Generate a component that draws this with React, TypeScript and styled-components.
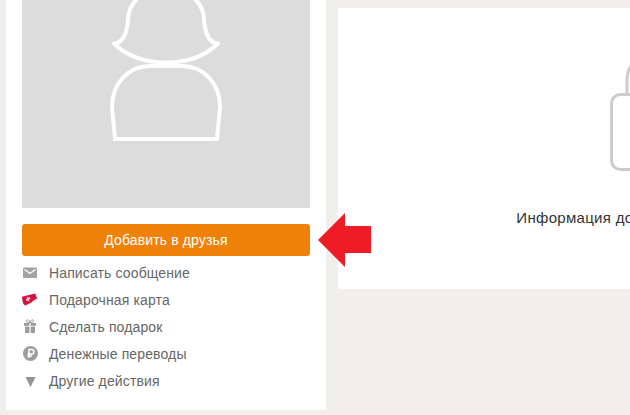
import React from 'react';
import styled, { createGlobalStyle } from 'styled-components';

const GlobalStyle = createGlobalStyle`
	html, body {
		margin: 0;
		padding: 0;
		width: 630px;
		height: 415px;
		overflow: hidden;
		background: #f0efeb;
		font-family: 'Liberation Sans', Arial, sans-serif;
	}
`;

const actions = [
	{ label: 'Написать сообщение', icon: <MailIcon /> },
	{ label: 'Подарочная карта', icon: <CardIcon /> },
	{ label: 'Сделать подарок', icon: <GiftIcon /> },
	{ label: 'Денежные переводы', icon: <RubleIcon /> },
	{ label: 'Другие действия', icon: <TriangleIcon /> },
];

function MailIcon() {
	return (
		<svg width='16' height='12' viewBox='0 0 16 12'>
			<rect x='1' y='0.5' width='14' height='10.5' rx='1' fill='#a3a3a3' />
			<path d='M2.5 2.5 L8 6.5 L13.5 2.5' fill='none' stroke='#fff' strokeWidth='1.4' />
		</svg>
	);
}

function CardIcon() {
	return (
		<svg width='17' height='13' viewBox='0 0 17 13'>
			<path d='M0 3.5 L14 0 L16.5 6.5 L3.5 13 Q1 11.5 0.5 8 Z' fill='#d4123f' />
			<path d='M11 9.2 L16.5 5.6' stroke='#fff' strokeWidth='1.2' />
			<path d='M5.5 3.8 L7.5 8.2 M4.3 6.6 L8.7 5.4 M4.8 8 L8.2 4' stroke='#f8d5dc' strokeWidth='1.1' />
		</svg>
	);
}

function GiftIcon() {
	return (
		<svg width='12' height='15' viewBox='0 0 12 15'>
			<path d='M6 3.4 C3 3.6 2 2.7 2.4 1.4 C3 0 5.4 1 6 3.4 C6.6 1 9 0 9.6 1.4 C10 2.7 9 3.6 6 3.4 Z' fill='none' stroke='#9c9c9c' strokeWidth='1' />
			<rect x='0' y='4' width='5.4' height='2.8' fill='#9c9c9c' />
			<rect x='6.6' y='4' width='5.4' height='2.8' fill='#9c9c9c' />
			<rect x='1' y='7.6' width='4.4' height='6.4' fill='#9c9c9c' />
			<rect x='6.6' y='7.6' width='4.4' height='6.4' fill='#9c9c9c' />
		</svg>
	);
}

function RubleIcon() {
	return (
		<svg width='15' height='15' viewBox='0 0 15 15'>
			<circle cx='7.5' cy='7.5' r='7.5' fill='#9c9c9c' />
			<path d='M6 12 V3.5 H8.6 A2.3 2.3 0 0 1 8.6 8.1 H4.5 M4.5 10 H9' fill='none' stroke='#fff' strokeWidth='1.5' />
		</svg>
	);
}

function TriangleIcon() {
	return (
		<svg width='11' height='12' viewBox='0 0 11 12'>
			<path d='M0.5 2 H10.5 L5.5 12 Z' fill='#8f9499' />
		</svg>
	);
}

export default function App() {
	return (
		<Page>
			<GlobalStyle />
			<Sidebar>
				<Photo>
					<svg width='288' height='208' viewBox='0 0 288 208'>
						<path
							d='M115 -1 C108 6 106 12 106 20 C105 32 102 42 93 43.5 L92 43.5 C106 57 124 62.5 144 62.5 C164 62.5 182 57 196 43.5 L195 43.5 C186 42 183 32 182 20 C182 12 180 6 173 -1'
							fill='none'
							stroke='#fff'
							strokeWidth='4'
							strokeLinejoin='round'
						/>
						<path
							d='M128 66 H160 C182 66 198 84 198 107 L195 139 H93 L90 107 C90 84 106 66 128 66 Z'
							fill='none'
							stroke='#fff'
							strokeWidth='4'
						/>
					</svg>
				</Photo>
				<AddButton>Добавить в друзья</AddButton>
				<ActionList>
					{actions.map(action => (
						<ActionRow key={action.label}>
							<ActionIcon>{action.icon}</ActionIcon>
							{action.label}
						</ActionRow>
					))}
				</ActionList>
				<Arrow width='54' height='54' viewBox='0 0 54 54'>
					<path d='M0 27 L27 0 V13 H53 V40 H27 V54 Z' fill='#ef1c25' />
				</Arrow>
			</Sidebar>
			<PrivateCard>
				<svg width='95' height='112' viewBox='0 0 95 112'>
					<path d='M17 32 V20 C17 10 20 5 24 2' fill='none' stroke='#ccc' strokeWidth='3' />
					<rect x='1.5' y='33.5' width='92' height='75' rx='9' fill='none' stroke='#ccc' strokeWidth='3' />
				</svg>
				<PrivateText>Информация доступна только друзьям</PrivateText>
			</PrivateCard>
		</Page>
	);
}

const Page = styled.div`
	display: flex;
	align-items: flex-start;
	gap: 12px;
	width: 977px;
	padding-left: 6px;
`;

const Sidebar = styled.div`
	position: relative;
	flex: none;
	box-sizing: border-box;
	width: 320px;
	height: 410px;
	padding: 0 16px;
	background: #fff;
`;

const Photo = styled.div`
	height: 208px;
	overflow: hidden;
	background: #dcdcdc;

	svg {
		display: block;
	}
`;

const AddButton = styled.button`
	display: block;
	width: 100%;
	height: 32px;
	margin: 16px 0 0;
	padding: 0;
	border: none;
	border-radius: 3px;
	background: #ee8208;
	color: #fff;
	font-family: inherit;
	font-size: 14px;
	letter-spacing: 0.13px;
`;

const ActionList = styled.ul`
	display: flex;
	flex-direction: column;
	margin: 3px 0 0;
	padding: 0;
	list-style: none;
`;

const ActionRow = styled.li`
	display: flex;
	align-items: center;
	height: 27px;
	color: #666;
	font-size: 14px;
	letter-spacing: 0.13px;
`;

const ActionIcon = styled.span`
	display: flex;
	flex: none;
	align-items: center;
	justify-content: center;
	width: 16px;
	margin-right: 11px;
`;

const Arrow = styled.svg`
	position: absolute;
	top: 213px;
	left: 312px;
`;

const PrivateCard = styled.div`
	display: flex;
	flex: none;
	flex-direction: column;
	align-items: center;
	box-sizing: border-box;
	width: 639px;
	height: 281px;
	margin-top: 8px;
	padding-top: 53px;
	background: #fff;

	svg {
		display: block;
	}
`;

const PrivateText = styled.div`
	margin-top: 36px;
	color: #333;
	font-size: 15px;
	letter-spacing: 0.3px;
`;
